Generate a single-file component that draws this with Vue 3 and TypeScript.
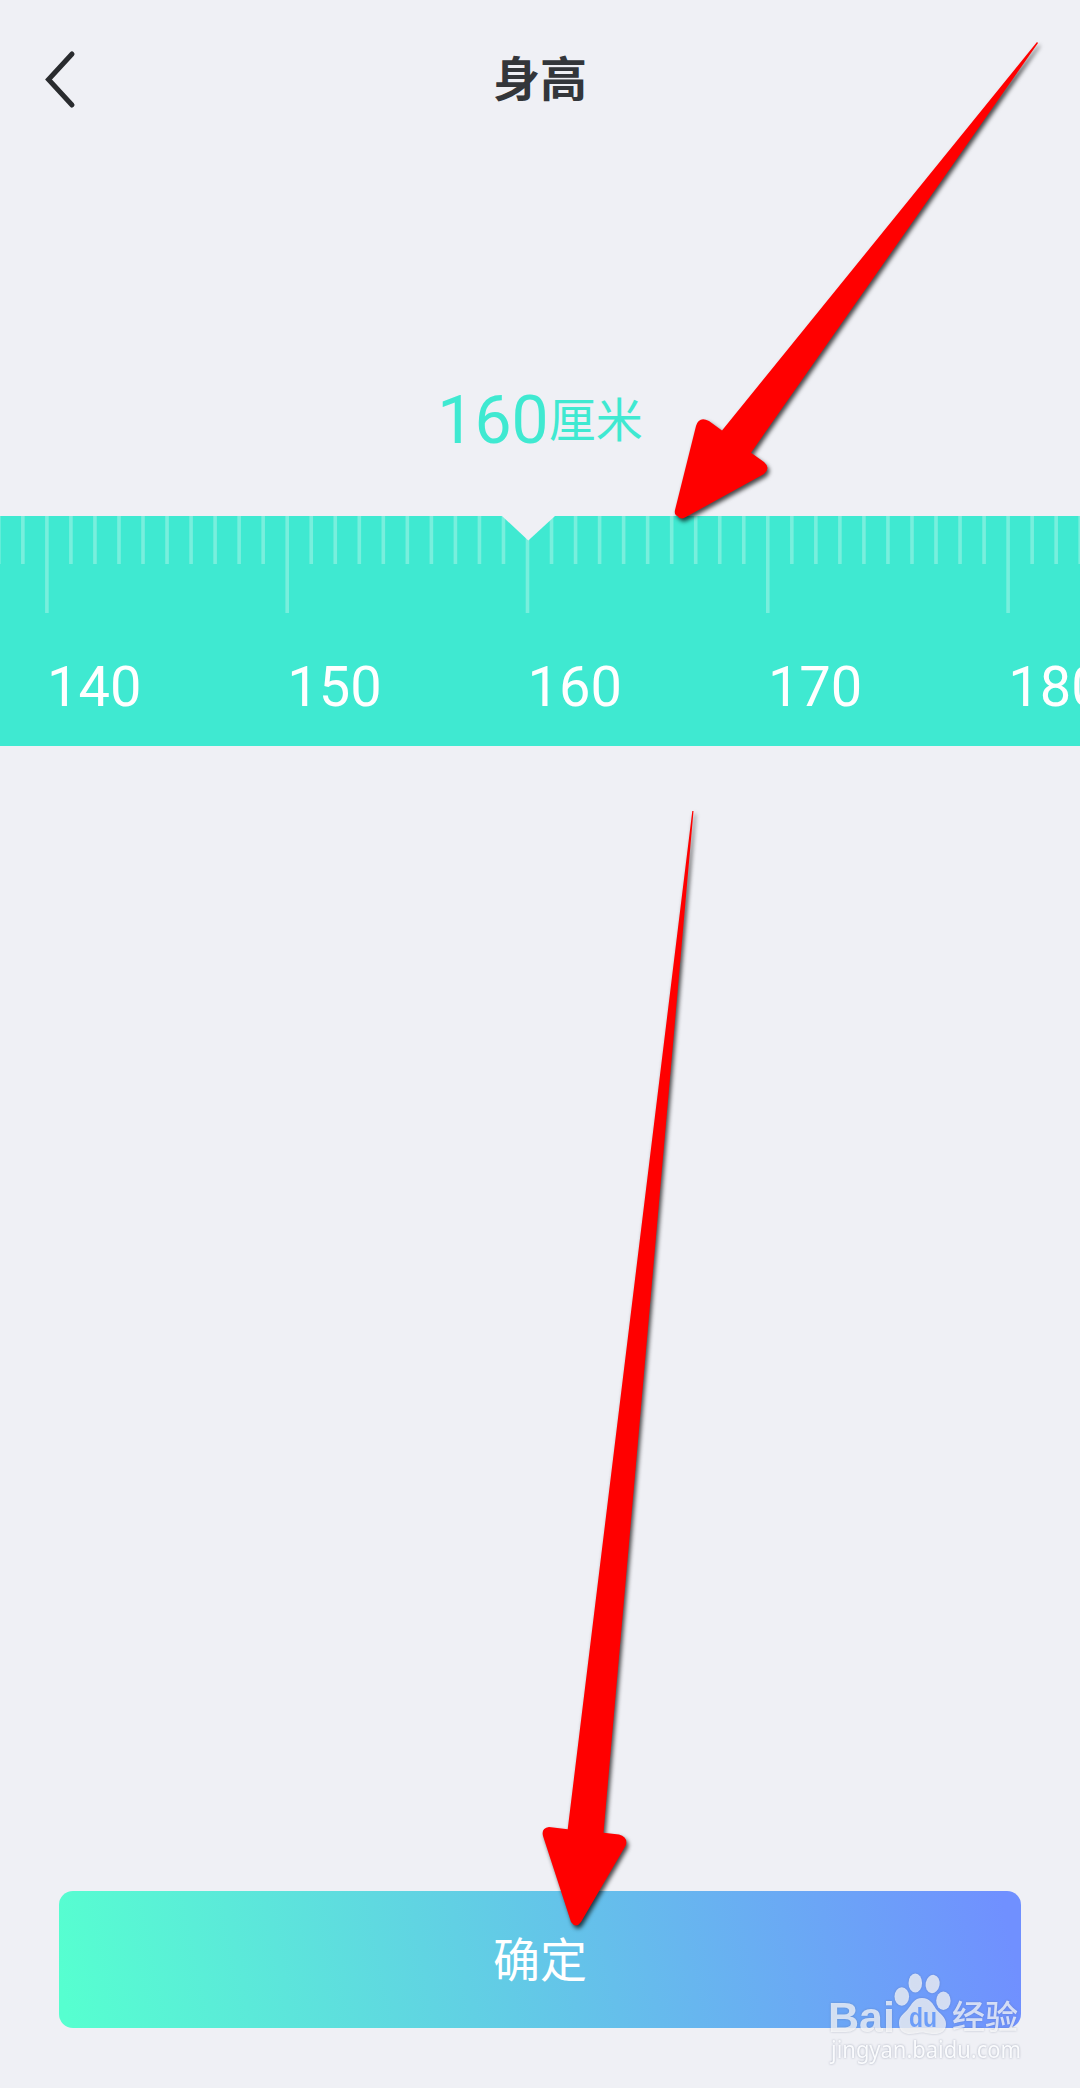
<script setup lang="ts">
interface Tick {
  value: number
  x: number
  height: number
}

const title: string = '身高'
const height: number = 160
const origin = 46.9
const step = 24.03

const ticks: Tick[] = Array.from({ length: 46 }, (_, i) => {
  const value = 138 + i
  return {
    value,
    x: origin + (value - 140) * step,
    height: value % 10 === 0 ? 97 : 48,
  }
})

const labels: number[] = [140, 150, 160, 170, 180]
</script>

<template>
  <div class="page">
    <header class="bar">
      <button class="back" aria-label="back">
        <svg width="40" height="64" viewBox="0 0 40 64">
          <path d="M32 7 8.500 32.500 32 58" fill="none" stroke="#292b2e" stroke-width="5" stroke-linecap="round" />
        </svg>
      </button>
      <h1 class="title">{{ title }}</h1>
      <span class="side"></span>
    </header>

    <section class="value">
      <span class="number">{{ height }}</span><span class="unit">厘米</span>
    </section>

    <section class="ruler">
      <svg class="ticks" width="1080" height="98" viewBox="0 0 1080 98">
        <rect v-for="t in ticks" :key="t.value" :x="t.x - 1.8" y="0" width="3.6" :height="t.height" />
        <path class="notch" d="M502 0H555L528.3 24.5Z" />
      </svg>
      <div class="labels">
        <span v-for="l in labels" :key="l" class="label">{{ l }}</span>
      </div>
    </section>

    <footer class="footer">
      <button class="confirm">确定</button>
    </footer>

    <svg class="overlay" width="1080" height="2088" viewBox="0 0 1080 2088">
      <g class="mark">
        <g fill="#fff" fill-opacity="0.72">
          <text class="brand" x="828" y="2032" textLength="67" lengthAdjust="spacingAndGlyphs">Bai</text>
          <ellipse cx="901.8" cy="1996.5" rx="7.3" ry="9.2" />
          <ellipse cx="915.3" cy="1983" rx="6.8" ry="9.4" />
          <ellipse cx="932.6" cy="1984" rx="7" ry="9.2" transform="rotate(10 932.6 1984)" />
          <ellipse cx="943.4" cy="2000.7" rx="7.2" ry="9.2" />
          <path d="M922 1998C930 1998 933 2004 936 2009C940 2014 946 2017 946 2024C946 2031 941 2034 934 2034C928 2034 926 2032.500 922 2032.500C918 2032.500 915 2034 910 2034C903 2034 899 2030 899 2023C899 2016 904 2014 908 2009C912 2004 914 1998 922 1998Z" />
          <text class="cn" x="952" y="2029" textLength="66" lengthAdjust="spacingAndGlyphs">经验</text>
        </g>
        <text class="du" x="909" y="2027" textLength="28" lengthAdjust="spacingAndGlyphs">du</text>
        <text class="url" x="831" y="2058" textLength="190" lengthAdjust="spacingAndGlyphs">jingyan.baidu.com</text>
      </g>
      <g class="arrows">
        <path d="M1037 42L1038 43L751 452.700L764 462Q771 468 764 474L685 517.500Q680 520 677.500 516Q674 515 675 510L696 426Q699 416 709 421L722 430.500Z" />
        <path d="M692.300 811H693.500L603.500 1832.800L619 1834.500Q628 1837 626 1845L581 1922Q576 1929 571 1922L543 1836Q541 1828 549 1827L567.700 1829.300Z" />
      </g>
    </svg>
  </div>
</template>

<style>
body {
  margin: 0;
}
</style>

<style scoped>
.page {
  position: relative;
  display: flex;
  flex-direction: column;
  width: 1080px;
  height: 2088px;
  overflow: hidden;
  background: #eff0f5;
  font-family: Roboto, "Noto Sans CJK SC", sans-serif;
}
button {
  padding: 0;
  border: 0;
  background: none;
  font-family: inherit;
}
.bar {
  display: flex;
  align-items: center;
  justify-content: space-between;
  height: 158px;
  padding: 0 40px;
}
.back {
  display: flex;
  width: 60px;
}
.side {
  width: 60px;
}
.title {
  margin: 2px 0 0;
  color: #33363a;
  font-size: 47px;
  font-weight: 700;
  line-height: 70px;
}
.value {
  height: 358px;
  box-sizing: border-box;
  padding-top: 223px;
  color: #3fe9d1;
  line-height: 80px;
  text-align: center;
}
.number {
  font-size: 66px;
}
.unit {
  font-size: 47px;
  line-height: 47px;
  vertical-align: 6px;
}
.ruler {
  display: flex;
  flex-direction: column;
  height: 230px;
  background: #3fe9d1;
}
.ticks {
  display: block;
  fill: #78efdd;
}
.notch {
  fill: #eff0f5;
}
.labels {
  display: flex;
  padding-left: 47px;
  margin-top: 41px;
}
.label {
  flex: 0 0 240.3px;
  color: #fff;
  font-size: 56px;
  line-height: 64px;
}
.footer {
  display: flex;
  margin-top: auto;
  padding: 0 59px 60px;
}
.confirm {
  flex: 1;
  height: 137px;
  box-sizing: border-box;
  padding-bottom: 6px;
  border-radius: 14px;
  background: linear-gradient(78deg, #56ffd0 1%, #7090ff 98%);
  color: #fff;
  font-size: 47px;
}
.overlay {
  position: absolute;
  inset: 0;
  pointer-events: none;
}
.arrows path {
  fill: #f00;
  filter: drop-shadow(2px 3px 2px rgba(0, 0, 0, 0.7));
}
.mark {
  filter: drop-shadow(0 0 1px rgba(80, 90, 120, 0.45));
}
.brand {
  font: 700 42px "Liberation Sans", sans-serif;
}
.cn {
  font: 500 33px "Noto Sans CJK SC", sans-serif;
}
.du {
  font: 700 27px "Liberation Sans", sans-serif;
  fill: #6c9df8;
}
.url {
  font: 400 24px "Noto Sans", sans-serif;
  fill: #fafbfd;
}
</style>
